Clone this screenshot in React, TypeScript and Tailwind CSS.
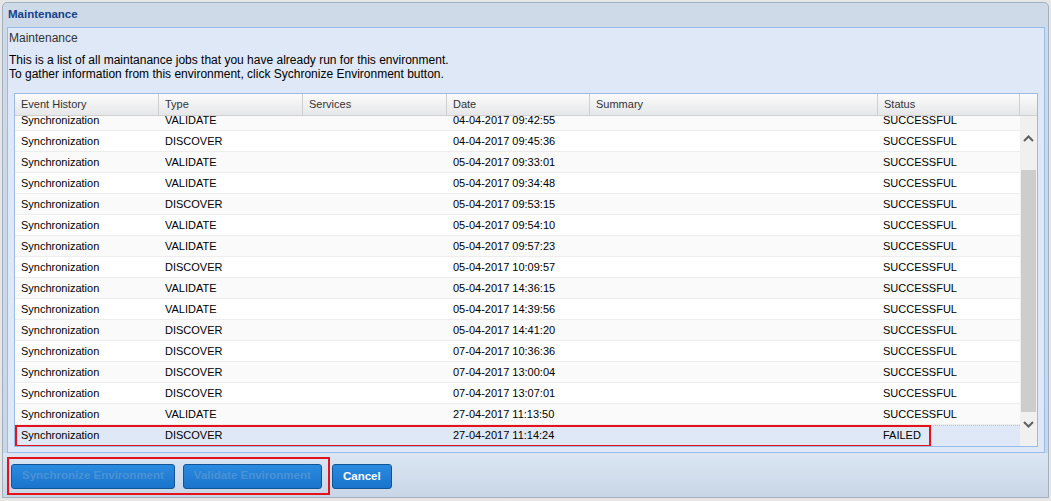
import type { ReactNode } from 'react';

type Job = { type: string; date: string; status: string };

const jobs: Job[] = [
  { type: 'VALIDATE', date: '04-04-2017 09:42:55', status: 'SUCCESSFUL' },
  { type: 'DISCOVER', date: '04-04-2017 09:45:36', status: 'SUCCESSFUL' },
  { type: 'VALIDATE', date: '05-04-2017 09:33:01', status: 'SUCCESSFUL' },
  { type: 'VALIDATE', date: '05-04-2017 09:34:48', status: 'SUCCESSFUL' },
  { type: 'DISCOVER', date: '05-04-2017 09:53:15', status: 'SUCCESSFUL' },
  { type: 'VALIDATE', date: '05-04-2017 09:54:10', status: 'SUCCESSFUL' },
  { type: 'VALIDATE', date: '05-04-2017 09:57:23', status: 'SUCCESSFUL' },
  { type: 'DISCOVER', date: '05-04-2017 10:09:57', status: 'SUCCESSFUL' },
  { type: 'VALIDATE', date: '05-04-2017 14:36:15', status: 'SUCCESSFUL' },
  { type: 'VALIDATE', date: '05-04-2017 14:39:56', status: 'SUCCESSFUL' },
  { type: 'DISCOVER', date: '05-04-2017 14:41:20', status: 'SUCCESSFUL' },
  { type: 'DISCOVER', date: '07-04-2017 10:36:36', status: 'SUCCESSFUL' },
  { type: 'DISCOVER', date: '07-04-2017 13:00:04', status: 'SUCCESSFUL' },
  { type: 'DISCOVER', date: '07-04-2017 13:07:01', status: 'SUCCESSFUL' },
  { type: 'VALIDATE', date: '27-04-2017 11:13:50', status: 'SUCCESSFUL' },
  { type: 'DISCOVER', date: '27-04-2017 11:14:24', status: 'FAILED' },
];

const columns = [
  { label: 'Event History', width: 'w-[144px]' },
  { label: 'Type', width: 'w-[144px]' },
  { label: 'Services', width: 'w-[144px]' },
  { label: 'Date', width: 'w-[143px]' },
  { label: 'Summary', width: 'w-[288px]' },
  { label: 'Status', width: 'w-[142px]' },
];

function Cell({ width, children }: { width: string; children?: ReactNode }) {
  return <div className={`${width} shrink-0 truncate px-[6px]`}>{children}</div>;
}

function Chevron({ up }: { up?: boolean }) {
  return (
    <svg width="11" height="7" viewBox="0 0 11 7" className="text-[#606060]">
      <polyline
        points={up ? '1,6 5.5,1.5 10,6' : '1,1 5.5,5.5 10,1'}
        fill="none"
        stroke="currentColor"
        strokeWidth="2"
      />
    </svg>
  );
}

function GridButton({ label, disabled }: { label: string; disabled?: boolean }) {
  return (
    <button
      className={`h-[25px] rounded-[3px] border border-[#125496] bg-linear-to-b from-[#2a8be0] to-[#1a74cb] px-[10px] text-[11.5px] font-bold ${
        disabled ? 'text-[#4b92d4]' : 'text-white'
      }`}
    >
      {label}
    </button>
  );
}

export default function App() {
  return (
    <div className="h-[501px] w-[1051px] overflow-hidden bg-[#e6e6e6] pl-[2px] pt-[2px] font-['Liberation_Sans',Arial,sans-serif]">
      <div className="flex h-[496px] w-[1047px] flex-col rounded-t-[5px] border border-[#a2afbf] bg-linear-to-b from-[#cfdae8] to-[#c9d7e7]">
        <div className="flex h-[24px] shrink-0 items-center px-[5px] text-[11.5px] font-bold text-[#15428b]">
          Maintenance
        </div>

        <div className="ml-[4px] mr-[3px] h-[426px] shrink-0 border border-[#99bbe8] bg-[#dfe8f6] pl-[1px] pt-[3px]">
          <div className="text-[12px] leading-[14px] text-[#333]">Maintenance</div>
          <div className="mt-[8px] text-[12px] leading-[14px] text-black">
            <p>This is a list of all maintanance jobs that you have already run for this environment.</p>
            <p>To gather information from this environment, click Sychronize Environment button.</p>
          </div>

          <div className="ml-[5px] mt-[12px] h-[354px] w-[1024px] border border-[#99bbe8] bg-white text-[11px]">
            <div className="flex h-[22px] border-b border-[#d0d0d0] bg-linear-to-b from-[#fbfbfb] to-[#e6e7e9] text-[#333]">
              {columns.map((col) => (
                <div
                  key={col.label}
                  className={`${col.width} flex shrink-0 items-center border-r border-[#d0d0d0] px-[6px]`}
                >
                  {col.label}
                </div>
              ))}
              <div className="w-[17px] shrink-0" />
            </div>

            <div className="flex h-[330px]">
              <div className="w-[1005px] shrink-0 overflow-hidden">
                <div className="-mt-[6px]">
                  {jobs.map((job, index) => {
                    const selected = index === jobs.length - 1;
                    return (
                      <div
                        key={job.date}
                        className={`relative flex h-[21px] items-center border-b text-black ${
                          selected
                            ? 'border-t border-dotted border-t-[#b8c4d4] border-b-[#dfe8f6] bg-[#dfe8f6]'
                            : index % 2 === 0
                              ? 'border-[#ededed] bg-[#fafafa]'
                              : 'border-[#ededed] bg-white'
                        }`}
                      >
                        <Cell width={columns[0].width}>Synchronization</Cell>
                        <Cell width={columns[1].width}>{job.type}</Cell>
                        <Cell width={columns[2].width} />
                        <Cell width={columns[3].width}>{job.date}</Cell>
                        <Cell width={columns[4].width} />
                        <div className="w-[142px] shrink-0 truncate px-[5px]">{job.status}</div>
                        {selected ? (
                          <div className="pointer-events-none absolute -top-[1px] left-0 h-[22px] w-[916px] border-2 border-[#e5121b]" />
                        ) : null}
                      </div>
                    );
                  })}
                </div>
              </div>

              <div className="flex w-[17px] shrink-0 flex-col items-center bg-[#f0f0f0] pt-[14px]">
                <div className="flex h-[17px] items-center justify-center">
                  <Chevron up />
                </div>
                <div className="mt-[23px] h-[242px] w-[15px] bg-[#cdcdcd]" />
                <div className="mt-[4px] flex h-[17px] items-center justify-center">
                  <Chevron />
                </div>
              </div>
            </div>
          </div>
        </div>

        <div className="flex flex-1 items-start bg-linear-to-b from-[#dce6f3] to-[#c8d6e6] pl-[4px] pt-[4px]">
          <div className="flex h-[38px] w-[323px] items-center gap-[8px] border-2 border-[#e5121b] pl-[2px]">
            <GridButton label="Synchronize Environment" disabled />
            <GridButton label="Validate Environment" disabled />
          </div>
          <div className="ml-[2px] mt-[6px]">
            <GridButton label="Cancel" />
          </div>
        </div>
      </div>
    </div>
  );
}
